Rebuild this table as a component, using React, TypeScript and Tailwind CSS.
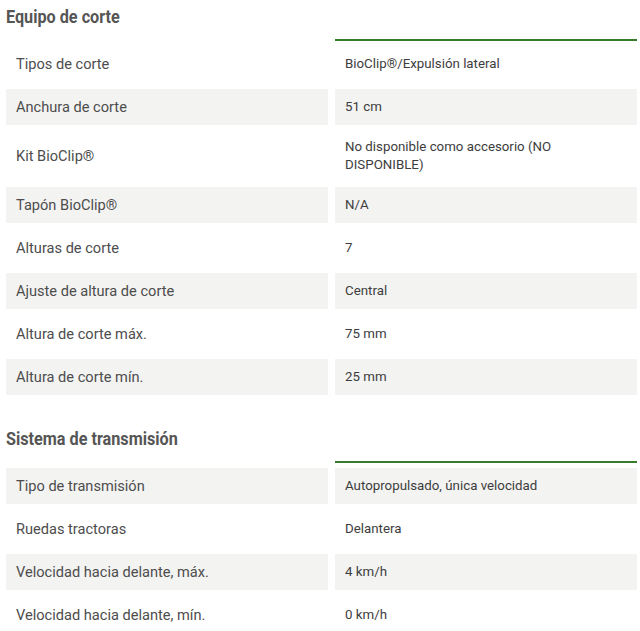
type Row = { label: string; value: string };

const corte: Row[] = [
  { label: "Tipos de corte", value: "BioClip®/Expulsión lateral" },
  { label: "Anchura de corte", value: "51 cm" },
  { label: "Kit BioClip®", value: "No disponible como accesorio (NO DISPONIBLE)" },
  { label: "Tapón BioClip®", value: "N/A" },
  { label: "Alturas de corte", value: "7" },
  { label: "Ajuste de altura de corte", value: "Central" },
  { label: "Altura de corte máx.", value: "75 mm" },
  { label: "Altura de corte mín.", value: "25 mm" },
];

const transmision: Row[] = [
  { label: "Tipo de transmisión", value: "Autopropulsado, única velocidad" },
  { label: "Ruedas tractoras", value: "Delantera" },
  { label: "Velocidad hacia delante, máx.", value: "4 km/h" },
  { label: "Velocidad hacia delante, mín.", value: "0 km/h" },
];

function SpecSection({ title, rows, firstGray }: { title: string; rows: Row[]; firstGray?: boolean }) {
  return (
    <section className="px-[6px]">
      <div className="grid grid-cols-[322px_302px] gap-x-[7px]">
        <div className="h-[41px] pt-[5px]">
          <h3 className="inline-block origin-left scale-x-[0.9] whitespace-nowrap text-[18px] font-bold leading-[24px] text-[#555555]">
            {title}
          </h3>
        </div>
        <div className="h-[41px] border-b-2 border-[#367c2b]" />
      </div>

      <div className="mt-[5px] grid grid-cols-[322px_302px] gap-x-[7px] gap-y-[7px]">
        {rows.map((r, i) => {
          const gray = firstGray ? i % 2 === 0 : i % 2 === 1;
          const bg = gray ? "bg-[#f3f3f2]" : "bg-white";
          return (
            <div key={r.label} className="contents">
              <div className={`${bg} flex min-h-[36px] items-center px-[10px] text-[14.6px] leading-[20px] text-[#4d4d4d]`}>
                {r.label}
              </div>
              <div className={`${bg} flex min-h-[36px] items-center px-[10px] py-[6px] text-[13.3px] leading-[18px] text-[#3d3d3d]`}>
                {r.value}
              </div>
            </div>
          );
        })}
      </div>
    </section>
  );
}

export default function App() {
  return (
    <div className="min-h-screen bg-white font-['Roboto',sans-serif]">
      <SpecSection title="Equipo de corte" rows={corte} />
      <div className="h-[27px]" />
      <SpecSection title="Sistema de transmisión" rows={transmision} firstGray />
    </div>
  );
}
